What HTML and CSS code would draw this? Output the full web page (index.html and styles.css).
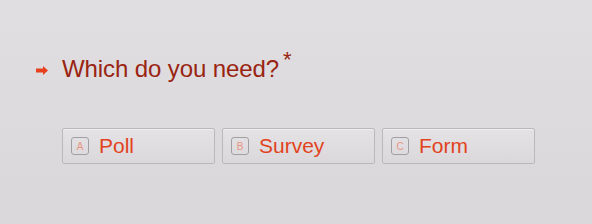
FILE: index.html
```html
<!DOCTYPE html>
<html lang="en">

<head>
    <meta charset="UTF-8">
    <meta name="viewport" content="width=device-width, initial-scale=1.0">
    <title>Which do you need?</title>
    <link rel="stylesheet" href="styles.css">
</head>

<body>
    <div class="wrap">
        <div class="question">
            <svg class="arrow" width="12" height="9" viewBox="0 0 12 9">
                <path d="M0 2.5H7V0L12 4.5L7 9V6.5H0Z" fill="#e8401c" />
            </svg>
            <h2>Which do you need?<span class="req">*</span></h2>
        </div>
        <div class="choices">
            <div class="choice"><span class="key">A</span><span class="label">Poll</span></div>
            <div class="choice"><span class="key">B</span><span class="label">Survey</span></div>
            <div class="choice"><span class="key">C</span><span class="label">Form</span></div>
        </div>
    </div>
</body>

</html>
```

FILE: styles.css
```css
* {
    margin: 0;
    padding: 0;
    box-sizing: border-box;
}

body {
    background: linear-gradient(180deg, #e0dee0, #d9d7d9);
    height: 224px;
    font-family: "Liberation Sans", Arial, sans-serif;
}

.wrap {
    padding: 55px 0 0 36px;
}

.question {
    display: flex;
    align-items: center;
}

.question .arrow {
    margin-right: 14px;
    margin-top: 2px;
}

.question h2 {
    font-size: 24px;
    line-height: 28px;
    font-weight: normal;
    letter-spacing: -0.1px;
    color: #9a2412;
}

.question .req {
    position: relative;
    top: -10px;
    margin-left: 4px;
    font-size: 22px;
}

.choices {
    display: flex;
    gap: 7px;
    margin: 44px 0 0 26px;
}

.choice {
    display: flex;
    align-items: center;
    width: 153px;
    height: 36px;
    padding-left: 8px;
    border: 1px solid #bab8ba;
    border-radius: 2px;
    background: linear-gradient(180deg, #e4e2e4, #dad8da);
    box-shadow: inset 0 1px 0 rgba(255, 255, 255, 0.4);
}

.choice .key {
    display: inline-flex;
    align-items: center;
    justify-content: center;
    width: 18px;
    height: 18px;
    border: 1px solid #a19fa1;
    border-radius: 3px;
    font-size: 10px;
    color: #ea9484;
}

.choice .label {
    margin-left: 10px;
    font-size: 21px;
    color: #e2431c;
}
```
